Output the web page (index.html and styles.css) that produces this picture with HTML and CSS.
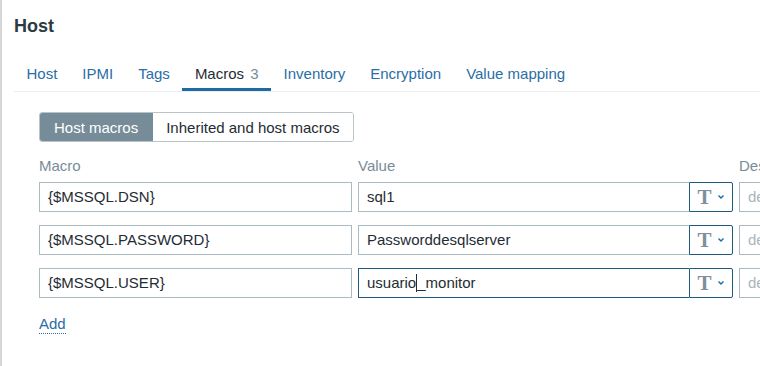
FILE: index.html
```html
<!DOCTYPE html>
<html lang="en">
<head>
    <meta charset="UTF-8">
    <title>Host - Macros</title>
    <link rel="stylesheet" href="styles.css">
</head>
<body>

    <div class="page">
        <h1 class="title">Host</h1>

        <ul class="tabs">
            <li><a href="#">Host</a></li>
            <li><a href="#">IPMI</a></li>
            <li><a href="#">Tags</a></li>
            <li class="active"><a href="#">Macros <span class="count">3</span></a></li>
            <li><a href="#">Inventory</a></li>
            <li><a href="#">Encryption</a></li>
            <li><a href="#">Value mapping</a></li>
        </ul>

        <div class="form">
            <div class="segmented">
                <span class="seg active">Host macros</span>
                <span class="seg">Inherited and host macros</span>
            </div>

            <div class="row labels">
                <div class="col-macro">Macro</div>
                <div class="col-value">Value</div>
                <div class="col-desc">Description</div>
            </div>

            <div class="row">
                <div class="field col-macro">{$MSSQL.DSN}</div>
                <div class="col-value value-group">
                    <div class="field">sql1</div>
                    <button class="type-btn"><span class="t">T</span><svg width="8" height="6" viewBox="0 0 8 6"><path d="M1.5 1.5 L4 4 L6.5 1.5" fill="none" stroke="#1e6ba4" stroke-width="1.4"/></svg></button>
                </div>
                <div class="field col-desc placeholder">description</div>
            </div>

            <div class="row">
                <div class="field col-macro">{$MSSQL.PASSWORD}</div>
                <div class="col-value value-group">
                    <div class="field">Passworddesqlserver</div>
                    <button class="type-btn"><span class="t">T</span><svg width="8" height="6" viewBox="0 0 8 6"><path d="M1.5 1.5 L4 4 L6.5 1.5" fill="none" stroke="#1e6ba4" stroke-width="1.4"/></svg></button>
                </div>
                <div class="field col-desc placeholder">description</div>
            </div>

            <div class="row">
                <div class="field col-macro">{$MSSQL.USER}</div>
                <div class="col-value value-group focused">
                    <div class="field">usuario<span class="caret"></span>_monitor</div>
                    <button class="type-btn"><span class="t">T</span><svg width="8" height="6" viewBox="0 0 8 6"><path d="M1.5 1.5 L4 4 L6.5 1.5" fill="none" stroke="#1e6ba4" stroke-width="1.4"/></svg></button>
                </div>
                <div class="field col-desc placeholder">description</div>
            </div>

            <a class="add-link" href="#">Add</a>
        </div>
    </div>

</body>
</html>
```

FILE: styles.css
```css
html, body {
    margin: 0;
    height: 100%;
    overflow: hidden;
}
body {
    font-family: "Liberation Sans", Arial, sans-serif;
    font-size: 15px;
    color: #1f2c33;
    background-color: #fff;
}
.page {
    height: 100%;
    border-left: 2px solid #d6d6d6;
    padding-left: 12px;
    box-sizing: border-box;
}
.title {
    margin: 0;
    padding-top: 14px;
    font-size: 18px;
    line-height: 24px;
    font-weight: bold;
    color: #2c3a42;
}
.tabs {
    list-style: none;
    margin: 21px 0 0 0;
    padding: 0;
    display: flex;
    border-bottom: 1px solid #ebeef0;
    white-space: nowrap;
}
.tabs li {
    padding: 6px 12.5px 5px;
    border-bottom: 3px solid transparent;
    line-height: 18px;
}
.tabs li.active {
    border-bottom-color: #1e6ba4;
}
.tabs a {
    color: #2a6ea6;
    text-decoration: none;
}
.tabs li.active a {
    color: #1f2c33;
}
.count {
    margin-left: 2px;
    color: #768d99;
}
.form {
    padding-left: 25px;
}
.segmented {
    display: inline-flex;
    margin-top: 20px;
    height: 30px;
    border: 1px solid #b8c4ca;
    border-radius: 3px;
    box-sizing: border-box;
    overflow: hidden;
}
.seg {
    display: flex;
    align-items: center;
    padding: 0 13px;
    background: #fff;
    color: #1f2c33;
}
.seg.active {
    background: #768d99;
    color: #fff;
    padding: 0 15px 0 14px;
}
.row {
    display: flex;
    gap: 6px;
    margin-bottom: 13px;
    white-space: nowrap;
}
.labels {
    margin-top: 15px;
    margin-bottom: 7px;
    line-height: 18px;
    color: #768d99;
}
.col-macro {
    width: 313px;
    flex: none;
}
.col-value {
    width: 375px;
    flex: none;
}
.col-desc {
    width: 300px;
    flex: none;
}
.field {
    height: 30px;
    box-sizing: border-box;
    border: 1px solid #acbbc2;
    padding: 0 8px;
    line-height: 28px;
    background: #fff;
    overflow: hidden;
}
.placeholder {
    color: #aab5bb;
}
.value-group {
    display: flex;
}
.value-group .field {
    flex: 1;
    border-right: none;
}
.value-group.focused .field {
    border-color: #1f5a80;
}
.caret {
    display: inline-block;
    width: 1px;
    height: 18px;
    background: #1f2c33;
    vertical-align: -4px;
}
.type-btn {
    width: 44px;
    height: 30px;
    flex: none;
    border: 1px solid #1f5a80;
    border-radius: 0 2px 2px 0;
    background: #fff;
    padding: 0;
    display: flex;
    align-items: center;
    justify-content: center;
    gap: 5px;
}
.type-btn .t {
    font-family: "Liberation Serif", "Times New Roman", serif;
    font-weight: bold;
    font-size: 21px;
    line-height: 20px;
    color: #7d909b;
}
.add-link {
    display: inline-block;
    margin-top: 4px;
    line-height: 18px;
    color: #2a6ea6;
    text-decoration: none;
    border-bottom: 1px dotted #2a6ea6;
}
```
